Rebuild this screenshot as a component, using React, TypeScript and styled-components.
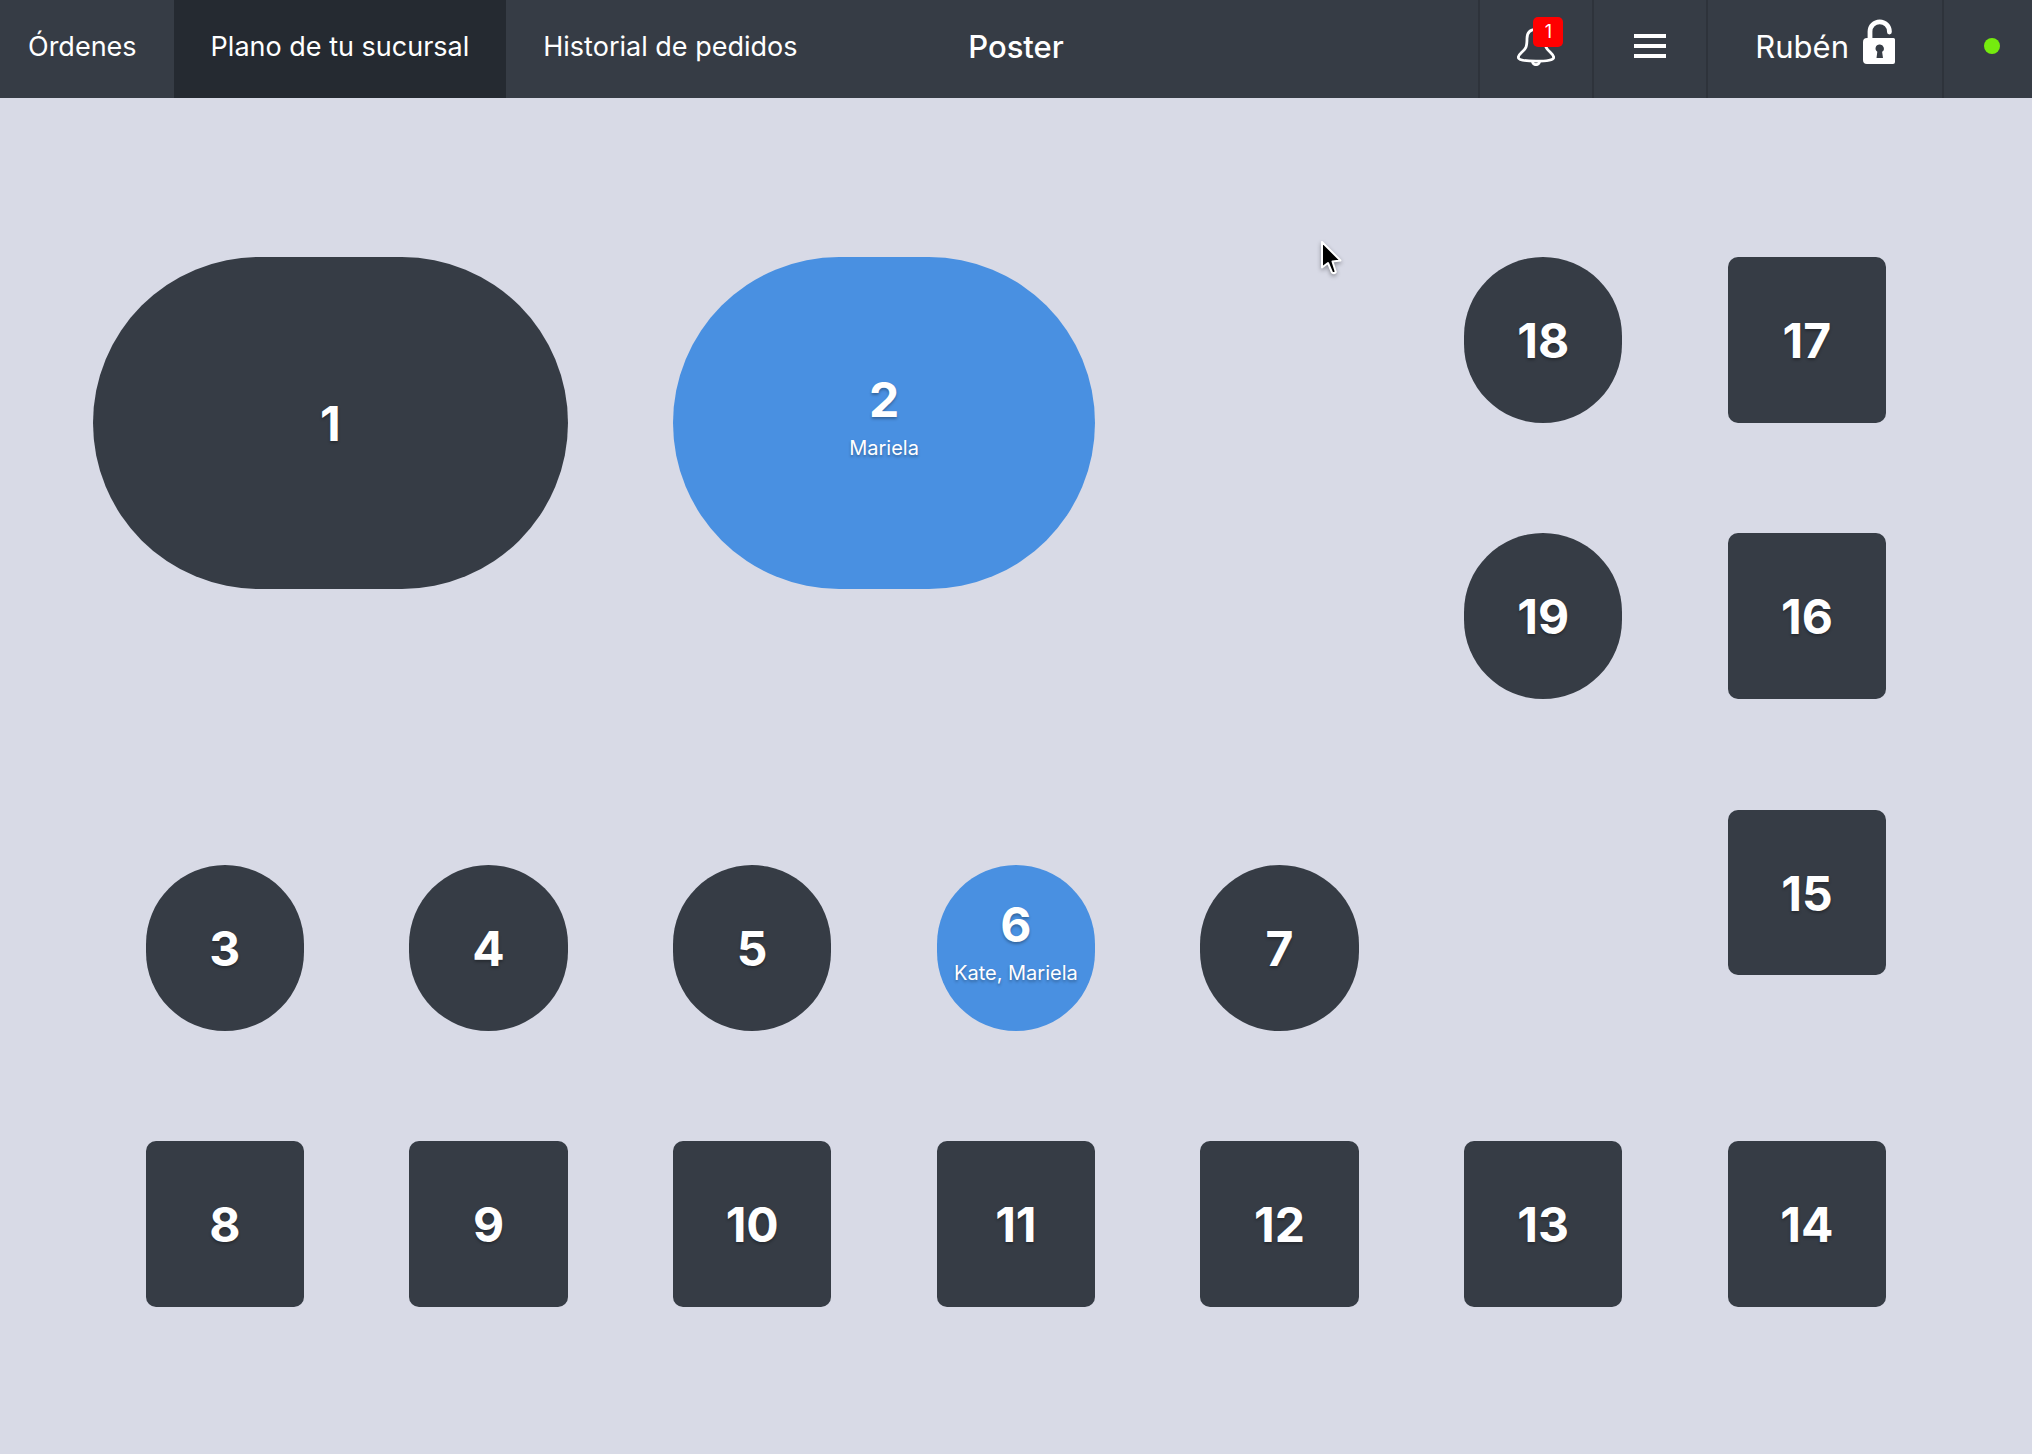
import React from "react";
import styled, { createGlobalStyle } from "styled-components";

const GlobalStyle = createGlobalStyle`
  *, *::before, *::after { box-sizing: border-box; }
  body {
    margin: 0;
    background: #d8dae6;
    font-family: Inter, "Liberation Sans", sans-serif;
  }
`;

const Page = styled.div`
  display: flex;
  flex-direction: column;
  min-height: 100vh;
`;

const Header = styled.header`
  display: grid;
  grid-template-columns: 1fr auto 1fr;
  height: 98px;
  background: #363c45;
  color: #fff;
`;

const Nav = styled.nav`
  display: flex;
`;

const NavLink = styled.a<{ $active?: boolean }>`
  display: flex;
  align-items: center;
  padding: 0 37px 4px;
  background: ${(p) => (p.$active ? "#252a31" : "transparent")};
  color: inherit;
  font-size: 27px;
  line-height: 36px;
  text-decoration: none;
  white-space: nowrap;

  &:first-child {
    padding-left: 28px;
  }
`;

const Title = styled.h1`
  align-self: center;
  margin: 0;
  padding-bottom: 4px;
  font-size: 31px;
  font-weight: 500;
  line-height: 40px;
`;

const Tools = styled.div`
  display: flex;
  justify-content: flex-end;
`;

const ToolButton = styled.button`
  display: flex;
  align-items: center;
  justify-content: center;
  gap: 14px;
  min-width: 114px;
  padding: 0 47px 4px;
  border: 0;
  border-left: 2px solid #2e333b;
  background: none;
  color: inherit;
  font: inherit;
  font-size: 31px;
  line-height: 40px;
`;

const IconButton = styled(ToolButton)`
  padding: 0 0 6px;
`;

const BellWrap = styled.span`
  position: relative;
  display: flex;
`;

const Badge = styled.span`
  position: absolute;
  top: -9px;
  right: -8px;
  width: 30px;
  height: 30px;
  border-radius: 5px;
  background: #f00;
  font-size: 18px;
  line-height: 30px;
  text-align: center;
`;

const Status = styled.div`
  display: flex;
  align-items: center;
  padding: 0 32px 6px 40px;
  border-left: 2px solid #2e333b;
`;

const Dot = styled.span`
  width: 16px;
  height: 16px;
  border-radius: 50%;
  background: #75eb0e;
`;

const Floor = styled.main`
  position: relative;
  flex: 1;
  display: grid;
  grid-template-columns: repeat(34, minmax(0, 1fr));
  grid-template-rows: repeat(19, minmax(0, 1fr));
  padding: 159px 146px 147px 93px;
`;

type Shape = "round" | "square";

const TableButton = styled.button<{
  $col: number;
  $row: number;
  $w: number;
  $h: number;
  $shape: Shape;
  $busy: boolean;
}>`
  grid-column: ${(p) => p.$col} / span ${(p) => p.$w};
  grid-row: ${(p) => p.$row} / span ${(p) => p.$h};
  display: flex;
  flex-direction: column;
  align-items: center;
  justify-content: center;
  padding: 2px 0 0;
  border: 0;
  border-radius: ${(p) => (p.$shape === "round" ? "999px" : "10px")};
  background: ${(p) => (p.$busy ? "#4990e1" : "#363c45")};
  color: #fff;
  font-family: inherit;
  text-shadow: 0 2px 3px rgba(0, 0, 0, 0.3);
`;

const TableNumber = styled.span`
  font-size: 48px;
  font-weight: 700;
  line-height: 56px;
`;

const Waiters = styled.span`
  padding-bottom: 8px;
  font-size: 20px;
  line-height: 40px;
  white-space: nowrap;
`;

const Pointer = styled.svg`
  position: absolute;
  top: 143px;
  left: 65%;
  overflow: visible;
  filter: drop-shadow(0 2px 2px rgba(0, 0, 0, 0.35));
`;

interface TableInfo {
  id: number;
  col: number;
  row: number;
  w?: number;
  h?: number;
  shape: Shape;
  waiters?: string;
}

const tables: TableInfo[] = [
  { id: 1, col: 1, row: 1, w: 9, h: 6, shape: "round" },
  { id: 2, col: 12, row: 1, w: 8, h: 6, shape: "round", waiters: "Mariela" },
  { id: 18, col: 27, row: 1, shape: "round" },
  { id: 17, col: 32, row: 1, shape: "square" },
  { id: 19, col: 27, row: 6, shape: "round" },
  { id: 16, col: 32, row: 6, shape: "square" },
  { id: 15, col: 32, row: 11, shape: "square" },
  { id: 3, col: 2, row: 12, shape: "round" },
  { id: 4, col: 7, row: 12, shape: "round" },
  { id: 5, col: 12, row: 12, shape: "round" },
  { id: 6, col: 17, row: 12, shape: "round", waiters: "Kate, Mariela" },
  { id: 7, col: 22, row: 12, shape: "round" },
  { id: 8, col: 2, row: 17, shape: "square" },
  { id: 9, col: 7, row: 17, shape: "square" },
  { id: 10, col: 12, row: 17, shape: "square" },
  { id: 11, col: 17, row: 17, shape: "square" },
  { id: 12, col: 22, row: 17, shape: "square" },
  { id: 13, col: 27, row: 17, shape: "square" },
  { id: 14, col: 32, row: 17, shape: "square" },
];

const BellIcon = () => (
  <svg width="38" height="40" viewBox="0 -2 38 40" fill="none" stroke="#fff" strokeWidth="2.8" aria-hidden="true">
    <path d="M19 1.3C13 1.3 10 4.5 10 10.5C10 19 9 20.5 4.5 24.5C2 26.8 1.3 28 1.3 29.5C1.3 32 8 33.2 19 33.2C30 33.2 36.7 32 36.7 29.5C36.7 28 36 26.8 33.5 24.5C29 20.5 28 19 28 10.5C28 4.5 25 1.3 19 1.3Z" />
    <path d="M15.5 33.5a3.5 3.2 0 0 0 7 0" />
  </svg>
);

const MenuIcon = () => (
  <svg width="32" height="24" viewBox="0 0 32 24" fill="#fff" aria-hidden="true">
    <path d="M0 0h32v4H0zM0 10h32v4H0zM0 20h32v4H0z" />
  </svg>
);

const LockIcon = () => (
  <svg width="32" height="56" viewBox="0 0 32 56" aria-hidden="true">
    <path d="M7 21V12.5a9.7 9.7 0 0 1 19.4 0V13" fill="none" stroke="#fff" strokeWidth="4.8" strokeLinecap="round" />
    <path
      fill="#fff"
      fillRule="evenodd"
      d="M4 19H30.5Q32 19 32 20.5V43Q32 45 30 45H4Q0 45 0 41V23Q0 19 4 19ZM16.5 25.5a4 4 0 0 0-2.2 7.3L13.5 39h6.5l-.9-6.2a4 4 0 0 0-2.6-7.3Z"
    />
  </svg>
);

export default function App() {
  return (
    <Page>
      <GlobalStyle />
      <Header>
        <Nav>
          <NavLink href="#ordenes">Órdenes</NavLink>
          <NavLink href="#plano" $active aria-current="page">
            Plano de tu sucursal
          </NavLink>
          <NavLink href="#historial">Historial de pedidos</NavLink>
        </Nav>
        <Title>Poster</Title>
        <Tools>
          <IconButton type="button" aria-label="Notificaciones">
            <BellWrap>
              <BellIcon />
              <Badge>1</Badge>
            </BellWrap>
          </IconButton>
          <IconButton type="button" aria-label="Menú">
            <MenuIcon />
          </IconButton>
          <ToolButton type="button">
            Rubén
            <LockIcon />
          </ToolButton>
          <Status>
            <Dot />
          </Status>
        </Tools>
      </Header>
      <Floor>
        {tables.map((t) => (
          <TableButton
            key={t.id}
            type="button"
            $col={t.col}
            $row={t.row}
            $w={t.w ?? 3}
            $h={t.h ?? 3}
            $shape={t.shape}
            $busy={Boolean(t.waiters)}
          >
            <TableNumber>{t.id}</TableNumber>
            {t.waiters && <Waiters>{t.waiters}</Waiters>}
          </TableButton>
        ))}
        <Pointer width="21" height="34" viewBox="0 0 21 34" aria-hidden="true">
          <path
            d="M1 1V26.5L7 22L11 31.5Q13 33 14.8 31L11.5 20.5L19.5 19.5Z"
            fill="#000"
            stroke="#fff"
            strokeWidth="2"
            strokeLinejoin="round"
          />
        </Pointer>
      </Floor>
    </Page>
  );
}
